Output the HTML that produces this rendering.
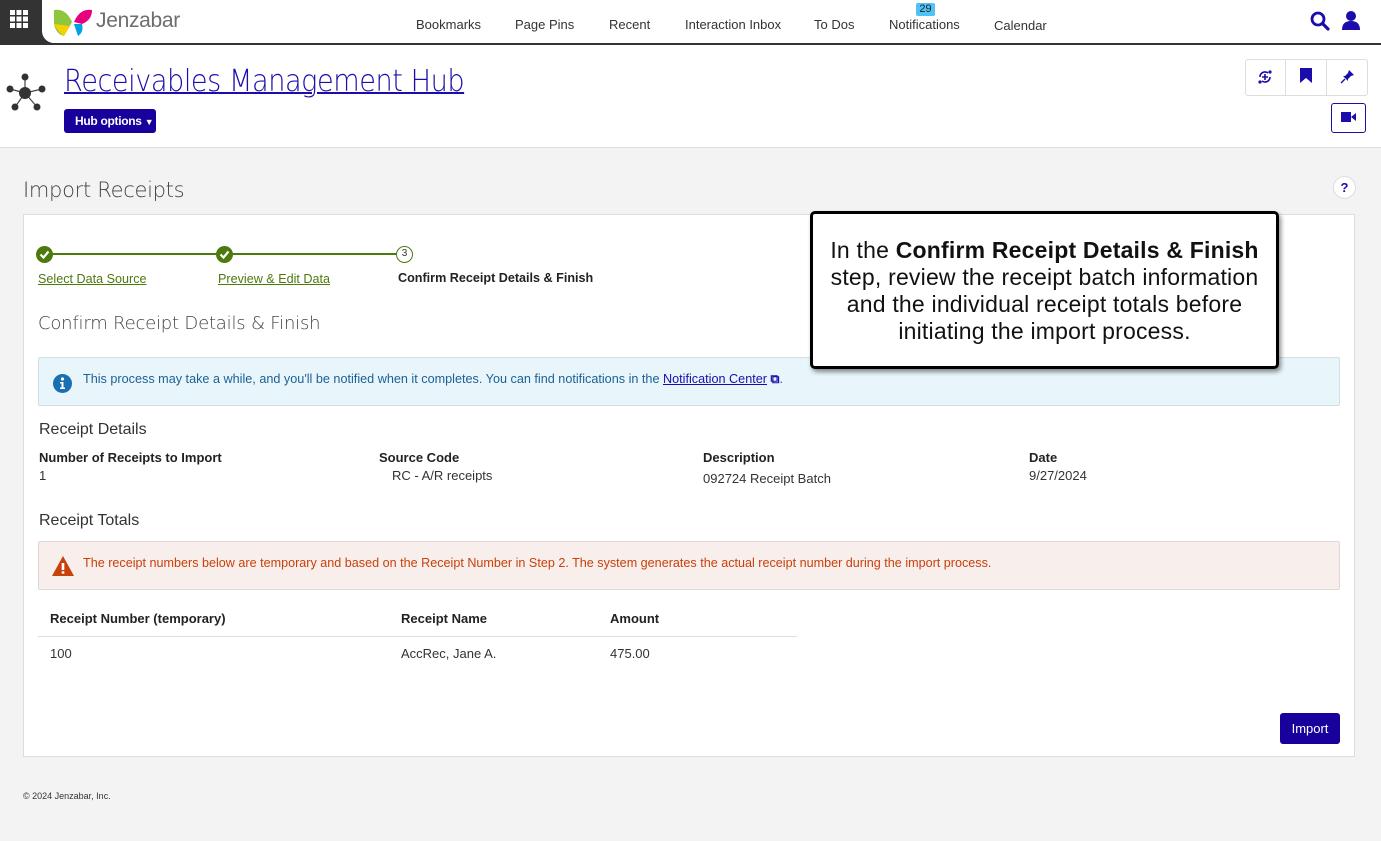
<!DOCTYPE html>
<html><head><meta charset="utf-8"><style>
*{box-sizing:border-box;margin:0;padding:0}
body{width:1381px;height:841px;background:#f3f3f3;font-family:"Liberation Sans",Arial,sans-serif;position:relative;overflow:hidden;color:#222}
.a{position:absolute;white-space:nowrap}
.top{position:absolute;left:0;top:0;width:1381px;height:148px;background:#fff;border-bottom:1px solid #ddd}
.nav{font-size:13px;color:#333;top:17px}
.card{position:absolute;left:23px;top:214px;width:1332px;height:543px;background:#fff;border:1px solid #ddd}
.lbl{font-size:14px;font-weight:bold;color:#222}
.val{font-size:13px;color:#333}
</style></head><body>
<div class="top"></div>
<div class="a" style="left:0;top:0;width:52px;height:44px;background:#333"></div>
<div class="a" style="left:42px;top:0;width:1339px;height:43px;background:#fff;border-bottom-left-radius:12px"></div>
<div class="a" style="left:0;top:43px;width:1381px;height:2px;background:#333"></div>
<svg class="a" style="left:10px;top:10px" width="18" height="18" viewBox="0 0 18 18" fill="#fff"><rect x="0" y="0" width="5" height="5"/><rect x="6.5" y="0" width="5" height="5"/><rect x="13" y="0" width="5" height="5"/><rect x="0" y="6.5" width="5" height="5"/><rect x="6.5" y="6.5" width="5" height="5"/><rect x="13" y="6.5" width="5" height="5"/><rect x="0" y="13" width="5" height="5"/><rect x="6.5" y="13" width="5" height="5"/><rect x="13" y="13" width="5" height="5"/></svg>
<svg class="a" style="left:52px;top:6px" width="42" height="32" viewBox="0 0 42 32"><path d="M2 4 Q14 2 20 16 L12 30 Q4 28 2 18Z" fill="#8ec63f"/><path d="M2 18 Q6 26 12 30 L18 20Z" fill="#f6d100"/><path d="M22 16 Q28 2 40 4 Q40 14 30 18Z" fill="#e6007e"/><path d="M22 18 L30 18 Q32 26 26 30Z" fill="#00a0e3"/></svg>
<div class="a" style="left:96px;top:9px;font-size:21px;color:#6d6d6d;letter-spacing:-0.3px">Jenzabar</div>
<div class="a nav" style="left:416px">Bookmarks</div>
<div class="a nav" style="left:515px">Page Pins</div>
<div class="a nav" style="left:609px">Recent</div>
<div class="a nav" style="left:685px">Interaction Inbox</div>
<div class="a nav" style="left:814px">To Dos</div>
<div class="a nav" style="left:889px">Notifications</div>
<div class="a" style="left:916px;top:3px;width:19px;height:13px;background:#4fc3f7;border-radius:2px;font-size:11px;text-align:center;line-height:13px;color:#222">29</div>
<div class="a nav" style="left:994px;top:18px">Calendar</div>
<svg class="a" style="left:1310px;top:11px" width="20" height="20" viewBox="0 0 20 20"><circle cx="8" cy="8" r="6" fill="none" stroke="#1a0dab" stroke-width="2.8"/><path d="M12.5 12.5L18 18" stroke="#1a0dab" stroke-width="3.2" stroke-linecap="round"/></svg>
<svg class="a" style="left:1341px;top:10px" width="20" height="20" viewBox="0 0 20 20" fill="#1a0dab"><circle cx="10" cy="6" r="5"/><path d="M1 20Q1 11 10 11Q19 11 19 20Z"/></svg>
<svg class="a" style="left:4px;top:72px" width="42" height="42" viewBox="0 0 42 42"><g stroke="#444" stroke-width="1.2"><line x1="21" y1="21" x2="21" y2="5"/><line x1="21" y1="21" x2="6" y2="17"/><line x1="21" y1="21" x2="38" y2="17"/><line x1="21" y1="21" x2="11" y2="35"/><line x1="21" y1="21" x2="33" y2="35"/></g><g fill="#333"><circle cx="21" cy="21" r="6"/><circle cx="21" cy="5" r="3.5"/><circle cx="6" cy="17" r="3.5"/><circle cx="38" cy="17" r="3.5"/><circle cx="11" cy="35" r="3.5"/><circle cx="33" cy="35" r="3.5"/></g></svg>
<div class="a" style="left:64px;top:64px;font-size:30px;color:#1a0dab;text-decoration:underline;text-decoration-thickness:2px;font-family:'DejaVu Sans',sans-serif;font-weight:200;letter-spacing:-0.5px;transform:scaleX(0.905);transform-origin:left">Receivables Management Hub</div>
<div class="a" style="left:64px;top:109px;width:92px;height:24px;background:#17009b;border-radius:3px;color:#fff;font-size:12px;font-weight:bold;line-height:24px;padding-left:11px;letter-spacing:-0.3px">Hub options <span style="font-size:9px">▼</span></div>
<div class="a" style="left:1245px;top:59px;width:123px;height:37px;border:1px solid #ddd;border-radius:3px;background:#fff"></div>
<div class="a" style="left:1285px;top:59px;width:1px;height:37px;background:#ddd"></div>
<div class="a" style="left:1326px;top:59px;width:1px;height:37px;background:#ddd"></div>
<svg class="a" style="left:1257px;top:69px" width="16" height="16" viewBox="0 0 16 16"><path d="M3 8a5 5 0 0 1 8-4" fill="none" stroke="#1a0dab" stroke-width="1.6"/><path d="M13 8a5 5 0 0 1-8 4" fill="none" stroke="#1a0dab" stroke-width="1.6"/><path d="M8 5v6M5 8h6" stroke="#1a0dab" stroke-width="1.6"/><circle cx="3" cy="13" r="1.6" fill="#1a0dab"/><circle cx="13" cy="3" r="1.6" fill="#1a0dab"/></svg>
<svg class="a" style="left:1300px;top:68px" width="12" height="15" viewBox="0 0 12 15"><path d="M0 0H12V15L6 10L0 15Z" fill="#1a0dab"/></svg>
<svg class="a" style="left:1340px;top:69px" width="15" height="15" viewBox="0 0 15 15"><path d="M9 1L14 6L11 7L8 10L8 12L3 7L5 7L8 4Z" fill="#1a0dab"/><path d="M5 10L1 14" stroke="#1a0dab" stroke-width="1.3"/></svg>
<div class="a" style="left:1331px;top:103px;width:35px;height:30px;border:1.5px solid #1a0dab;border-radius:3px;background:#fff"></div>
<svg class="a" style="left:1341px;top:111px" width="15" height="12" viewBox="0 0 15 12" fill="#1a0dab"><rect x="0" y="1" width="10" height="10"/><path d="M10 6L15 2V10Z"/></svg>
<div class="a" style="left:23px;top:178px;font-size:21px;color:#444;font-family:'DejaVu Sans',sans-serif;font-weight:200;letter-spacing:-0.3px">Import Receipts</div>
<div class="a" style="left:1333px;top:176px;width:23px;height:23px;border-radius:50%;background:#fff;border:1px solid #ddd;text-align:center;font-size:13px;font-weight:bold;line-height:21px;color:#1a0dab">?</div>
<div class="card"></div>
<div class="a" style="left:52px;top:253px;width:165px;height:2px;background:#4d7a0c"></div>
<div class="a" style="left:232px;top:253px;width:165px;height:2px;background:#4d7a0c"></div>
<svg class="a" style="left:36px;top:246px" width="17" height="17" viewBox="0 0 17 17"><circle cx="8.5" cy="8.5" r="8.5" fill="#4d7a0c"/><path d="M4.5 8.5L7.5 11.5L12.5 5.5" fill="none" stroke="#fff" stroke-width="2.2"/></svg>
<svg class="a" style="left:216px;top:246px" width="17" height="17" viewBox="0 0 17 17"><circle cx="8.5" cy="8.5" r="8.5" fill="#4d7a0c"/><path d="M4.5 8.5L7.5 11.5L12.5 5.5" fill="none" stroke="#fff" stroke-width="2.2"/></svg>
<div class="a" style="left:396px;top:246px;width:17px;height:17px;border:1.5px solid #4d7a0c;border-radius:50%;background:#fff;font-size:10px;text-align:center;line-height:14px;color:#333">3</div>
<div class="a" style="left:38px;top:272px;font-size:12.6px;color:#4d7a0c;text-decoration:underline">Select Data Source</div>
<div class="a" style="left:218px;top:272px;font-size:12.6px;color:#4d7a0c;text-decoration:underline">Preview &amp; Edit Data</div>
<div class="a" style="left:398px;top:271px;font-size:12.6px;font-weight:bold;color:#222">Confirm Receipt Details &amp; Finish</div>
<div class="a" style="left:38px;top:313px;font-size:18px;color:#444;font-family:'DejaVu Sans',sans-serif;font-weight:200;letter-spacing:-0.2px">Confirm Receipt Details &amp; Finish</div>
<div class="a" style="left:38px;top:357px;width:1302px;height:49px;background:#e8f6fc;border:1px solid #d3dde2;border-radius:2px"></div>
<svg class="a" style="left:53px;top:374px" width="19" height="19" viewBox="0 0 19 19"><circle cx="9.5" cy="9.5" r="9.5" fill="#1a6fb0"/><circle cx="9.5" cy="5" r="1.6" fill="#fff"/><path d="M7 8h3.5v5.5h1.5v1.5h-5v-1.5h1.5v-4h-1.5z" fill="#fff"/></svg>
<div class="a" style="left:83px;top:372px;font-size:12.65px;color:#1d5f94">This process may take a while, and you'll be notified when it completes. You can find notifications in the <span style="color:#1a0dab;text-decoration:underline">Notification Center</span> <span style="color:#1a0dab;font-weight:bold">⧉</span>.</div>
<div class="a" style="left:39px;top:421px;font-size:16px;color:#333">Receipt Details</div>
<div class="a lbl" style="left:39px;top:450px;font-size:13px">Number of Receipts to Import</div>
<div class="a val" style="left:39px;top:468px">1</div>
<div class="a lbl" style="left:379px;top:450px;font-size:13px">Source Code</div>
<div class="a val" style="left:392px;top:468px">RC - A/R receipts</div>
<div class="a lbl" style="left:703px;top:450px;font-size:13px">Description</div>
<div class="a val" style="left:703px;top:471px">092724 Receipt Batch</div>
<div class="a lbl" style="left:1029px;top:450px;font-size:13px">Date</div>
<div class="a val" style="left:1029px;top:468px">9/27/2024</div>
<div class="a" style="left:39px;top:512px;font-size:16px;color:#333">Receipt Totals</div>
<div class="a" style="left:38px;top:541px;width:1302px;height:49px;background:#f8eeeb;border:1px solid #e0d8d6;border-radius:2px"></div>
<svg class="a" style="left:52px;top:556px" width="22" height="20" viewBox="0 0 22 20"><path d="M11 0L22 20H0Z" fill="#c8410a"/><rect x="9.7" y="7" width="2.6" height="7" fill="#fff"/><rect x="9.7" y="15.3" width="2.6" height="2.4" fill="#fff"/></svg>
<div class="a" style="left:83px;top:556px;font-size:12.6px;color:#c8410a">The receipt numbers below are temporary and based on the Receipt Number in Step 2. The system generates the actual receipt number during the import process.</div>
<div class="a lbl" style="left:50px;top:611px;font-size:13px">Receipt Number (temporary)</div>
<div class="a lbl" style="left:401px;top:611px;font-size:13px">Receipt Name</div>
<div class="a lbl" style="left:610px;top:611px;font-size:13px">Amount</div>
<div class="a" style="left:38px;top:636px;width:759px;height:1px;background:#ddd"></div>
<div class="a val" style="left:50px;top:646px">100</div>
<div class="a val" style="left:401px;top:646px">AccRec, Jane A.</div>
<div class="a val" style="left:610px;top:646px">475.00</div>
<div class="a" style="left:1280px;top:713px;width:60px;height:31px;background:#17009b;border-radius:3px;color:#fff;font-size:13px;text-align:center;line-height:31px">Import</div>
<div class="a" style="left:23px;top:791px;font-size:9px;color:#333">© 2024 Jenzabar, Inc.</div>
<div class="a" style="left:810px;top:211px;width:469px;height:158px;background:#fff;border:3px solid #000;border-radius:5px;box-shadow:2px 3px 5px rgba(0,0,0,0.45);white-space:normal;text-align:center;font-size:23px;line-height:27px;color:#111;padding-top:23px;letter-spacing:0.2px">In the <b>Confirm Receipt Details &amp; Finish</b><br>step, review the receipt batch information<br>and the individual receipt totals before<br>initiating the import process.</div>
</body></html>
